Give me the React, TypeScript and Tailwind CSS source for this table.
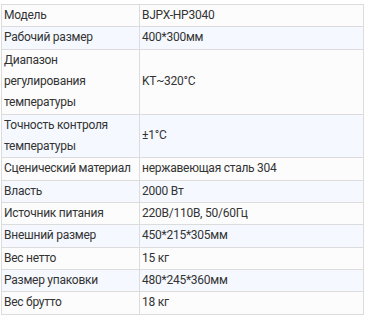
const rows: [string, string][] = [
  ["Модель", "BJPX-HP3040"],
  ["Рабочий размер", "400*300мм"],
  ["Диапазон регулирования температуры", "KT~320°C"],
  ["Точность контроля температуры", "±1°C"],
  ["Сценический материал", "нержавеющая сталь 304"],
  ["Власть", "2000 Вт"],
  ["Источник питания", "220В/110В, 50/60Гц"],
  ["Внешний размер", "450*215*305мм"],
  ["Вес нетто", "15 кг"],
  ["Размер упаковки", "480*245*360мм"],
  ["Вес брутто", "18 кг"],
];

export default function App() {
  return (
    <div className="w-[371px] h-[319px] bg-white pt-[4px] pl-[1px] font-['Roboto',sans-serif] text-[12px] tracking-[-0.25px] text-[#333]">
      <table className="w-[363px] border-collapse border border-[#dcdcdc] table-fixed">
        <colgroup>
          <col className="w-[138px]" />
          <col />
        </colgroup>
        <tbody>
          {rows.map(([k, v], i) => (
            <tr key={k} className={i % 2 === 1 ? "bg-[#f5f9ff]" : "bg-[#fcfcfc]"}>
              <td className="border border-[#dcdcdc] px-[2px] py-0 leading-[21.35px] align-middle">{k}</td>
              <td className="border border-[#dcdcdc] px-[2px] py-0 leading-[21.35px] align-middle">{v}</td>
            </tr>
          ))}
        </tbody>
      </table>
    </div>
  );
}
